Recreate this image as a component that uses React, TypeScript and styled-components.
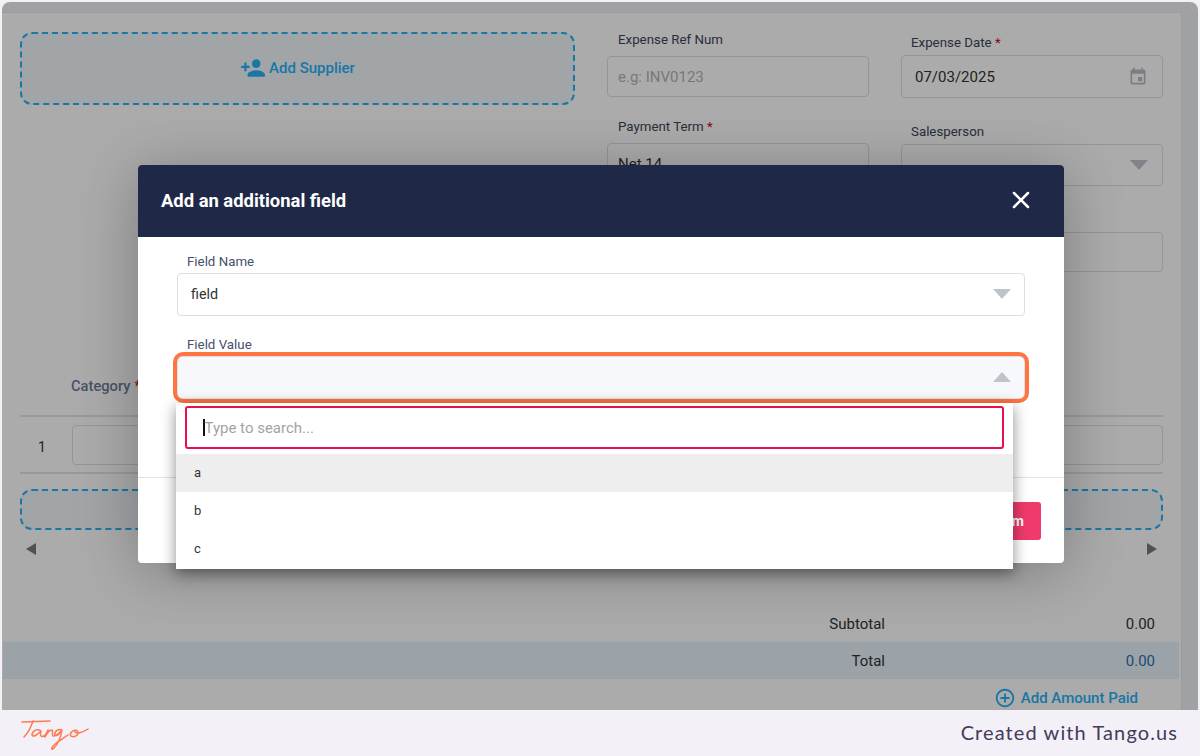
import styled, { createGlobalStyle } from 'styled-components'
import { MdPersonAdd, MdEvent, MdAddCircleOutline } from 'react-icons/md'
import { X } from 'lucide-react'

const Global = createGlobalStyle`
    html, body {
        margin: 0;
        padding: 0;
        height: 756px;
        overflow: hidden;
        font-family: Roboto, "Liberation Sans", sans-serif;
    }
`;

const Page = styled.div`
    width: 1200px;
    height: 756px;
    background: #f3f1f7;
    display: flex;
    flex-direction: column;
    padding: 2px 2px 0;
    box-sizing: border-box;
`;

const Stage = styled.div`
    position: relative;
    flex: none;
    height: 708px;
    background: #eff1f4;
    border-radius: 8px 8px 0 0;
    overflow: hidden;
    padding-top: 10px;
    box-sizing: border-box;
`;

const Card = styled.div`
    width: 1180px;
    height: 698px;
    background: #fff;
    border-top: 1px solid #e8e8e8;
    border-right: 1px solid #e8e8e8;
    padding: 19px 18px 0;
    box-sizing: border-box;
`;

const TopGrid = styled.div`
    display: grid;
    grid-template-columns: 555px 262px 262px;
    column-gap: 32px;
    align-items: start;
`;

const DashedBox = styled.div<{ $h: number }>`
    height: ${p => p.$h}px;
    border: 2px dashed #25b2f5;
    border-radius: 12px;
    background: #f2f7fb;
    box-sizing: border-box;
    display: flex;
    align-items: center;
    justify-content: center;
    gap: 3px;
    padding-bottom: 2px;
    color: #25b2f5;
    font-size: 15px;
    font-weight: 500;
`;

const Label = styled.div<{ $above?: number; $gap?: number }>`
    height: 16px;
    line-height: 16px;
    font-size: 13.3px;
    color: #3c4658;
    margin-top: ${p => p.$above ?? 0}px;
    margin-bottom: ${p => p.$gap ?? 4}px;
`;

const FieldColumn = styled.div<{ $top: number; $indent: number }>`
    display: flex;
    flex-direction: column;
    padding-top: ${p => p.$top}px;

    ${Label} {
        padding-left: ${p => p.$indent}px;
    }
`;

const Star = styled.span`
    color: #d0021b;
`;

const Input = styled.div<{ $h: number; $above?: number; $muted?: boolean; $inset?: number }>`
    height: ${p => p.$h}px;
    margin-top: ${p => p.$above ?? 0}px;
    border: 1px solid #dcdfe4;
    border-radius: 4px;
    box-sizing: border-box;
    display: flex;
    align-items: center;
    justify-content: space-between;
    padding: 0 14px 0 ${p => p.$inset ?? 10}px;
    font-size: 15px;
    color: ${p => (p.$muted ? '#b4b4b4' : '#333')};
`;

const Caret = styled.span<{ $up?: boolean }>`
    flex: none;
    width: 0;
    height: 0;
    border-left: 9.5px solid transparent;
    border-right: 9.5px solid transparent;
    border-top: ${p => (p.$up ? '0' : '10px solid #bfc3ca')};
    border-bottom: ${p => (p.$up ? '10px solid #bfc3ca' : '0')};
`;

const TableHead = styled.div`
    margin-top: 97px;
    height: 48px;
    padding: 0 0 12px 51px;
    border-bottom: 2px solid #e4e4e4;
    box-sizing: border-box;
    display: flex;
    align-items: center;
    gap: 4px;
    font-size: 14.7px;
    font-weight: 500;
    color: #6d7d9c;
`;

const TableRow = styled.div`
    height: 57px;
    border-bottom: 2px solid #e4e4e4;
    box-sizing: border-box;
    display: flex;
    align-items: center;
    font-size: 14px;
    color: #333;
`;

const RowNumber = styled.div`
    width: 52px;
    padding: 4px 0 0 18px;
    box-sizing: border-box;
`;

const RowInput = styled.div`
    flex: 1;
    height: 40px;
    border: 1px solid #dcdfe4;
    border-radius: 4px;
    box-sizing: border-box;
`;

const AddRow = styled.div`
    margin-top: 15px;
`;

const ScrollBar = styled.div`
    display: flex;
    justify-content: space-between;
    align-items: center;
    margin-top: 13px;
    padding: 0 6px;
`;

const Arrow = styled.span<{ $right?: boolean }>`
    width: 0;
    height: 0;
    border-top: 6.5px solid transparent;
    border-bottom: 6.5px solid transparent;
    border-left: ${p => (p.$right ? '10px solid #7a7a7a' : '0')};
    border-right: ${p => (p.$right ? '0' : '10px solid #7a7a7a')};
`;

const Totals = styled.div`
    margin: 50px -16px 0 -17px;
    font-size: 15px;
    color: #333;
`;

const TotalRow = styled.div<{ $hl?: boolean }>`
    height: 37px;
    display: flex;
    align-items: center;
    justify-content: flex-end;
    padding-right: 24px;
    background: ${p => (p.$hl ? '#e7f4fd' : 'transparent')};
`;

const TotalValue = styled.span<{ $blue?: boolean }>`
    width: 270px;
    text-align: right;
    color: ${p => (p.$blue ? '#2f6fa8' : '#333')};
`;

const AddPaid = styled.div`
    display: flex;
    align-items: center;
    justify-content: flex-end;
    gap: 5px;
    height: 36px;
    padding: 1px 41px 0 0;
    box-sizing: border-box;
    color: #25b2f5;
    font-size: 15px;
    font-weight: 500;
`;

const Overlay = styled.div`
    position: absolute;
    inset: 0;
    background: rgba(0, 0, 0, 0.33);
    padding: 163px 0 0 136px;
    box-sizing: border-box;
`;

const Modal = styled.div`
    width: 926px;
    height: 398px;
    background: #fff;
    border-radius: 4px;
    box-shadow: 0 8px 60px rgba(0, 0, 0, 0.28);
`;

const ModalHeader = styled.div`
    height: 72px;
    background: #1f2947;
    border-radius: 4px 4px 0 0;
    display: flex;
    align-items: center;
    justify-content: space-between;
    padding: 0 29px 2px 23px;
    box-sizing: border-box;
    color: #fff;
    font-size: 18.4px;
    font-weight: 700;
`;

const ModalBody = styled.div`
    height: 241px;
    padding: 17px 39px 0;
    border-bottom: 1px solid #e2e2e2;
    box-sizing: border-box;
`;

const ModalLabel = styled.div<{ $above?: number }>`
    height: 16px;
    line-height: 16px;
    margin: ${p => p.$above ?? 0}px 0 3px 10px;
    font-size: 13.3px;
    color: #44506b;
`;

const SelectWrap = styled.div`
    position: relative;
`;

const Select = styled.div<{ $open?: boolean }>`
    height: 43px;
    border: 1px solid #dcdfe4;
    border-radius: ${p => (p.$open ? 6 : 4)}px;
    box-sizing: border-box;
    display: flex;
    align-items: center;
    justify-content: space-between;
    padding: 0 13px 2px 13px;
    font-size: 14.3px;
    color: #333;
    background: ${p => (p.$open ? '#f6f8fc' : '#fff')};
    outline: ${p => (p.$open ? '4px solid #ff7442' : 'none')};
`;

const Dropdown = styled.div`
    position: absolute;
    top: 47px;
    left: -1px;
    width: 837px;
    height: 166px;
    background: #fff;
    box-shadow: 0 4px 14px rgba(0, 0, 0, 0.45);
    padding-top: 3px;
    box-sizing: border-box;
`;

const SearchBox = styled.div`
    margin: 0 9px 5px;
    height: 43px;
    border: 2px solid #e8104a;
    border-radius: 3px;
    box-sizing: border-box;
    display: flex;
    align-items: center;
    padding-left: 16px;
    font-size: 15px;
    color: #a3a3a3;
`;

const TextCursor = styled.span`
    width: 1.5px;
    height: 17px;
    background: #111;
`;

const Option = styled.div<{ $active?: boolean }>`
    height: 38.3px;
    padding: 0 0 2px 18px;
    box-sizing: border-box;
    display: flex;
    align-items: center;
    font-size: 13px;
    color: #333;
    background: ${p => (p.$active ? '#eeeeee' : 'transparent')};
`;

const ModalFooter = styled.div`
    display: flex;
    justify-content: flex-end;
    padding: 24px 23px 0 0;
`;

const ConfirmButton = styled.div`
    height: 38px;
    padding: 0 17px;
    background: #f03a6c;
    border-radius: 3px;
    display: flex;
    align-items: center;
    color: #fff;
    font-size: 14px;
    font-weight: 700;
`;

const Footer = styled.div`
    flex: 1;
    display: flex;
    align-items: center;
    justify-content: space-between;
    padding: 0 20px 0 18px;
`;

const Credit = styled.div`
    font-family: Lato, sans-serif;
    font-size: 20px;
    letter-spacing: 1.1px;
    color: #453a5a;
    padding-bottom: 2px;
`;

const TangoLogo = () => (
    <svg width="72" height="36" viewBox="0 0 72 36" fill="none" stroke="#ff7a50" strokeWidth="1.5" strokeLinecap="round" strokeLinejoin="round">
        <path d="M2 7 L30 6" />
        <path d="M13 6 C11 12 8 18 4 22" />
        <path d="M21 16 C17 13 12 16 12 20 C13 23 18 19 21 16 C20 19 20 23 24 21 C26 20 27 17 28 15 C27 18 26 20 25 22 C27 18 30 15 32 15 C34 16 31 20 33 21 C36 22 39 18 42 15 C38 13 34 17 35 20 C37 22 40 18 42 15 C41 21 39 28 34 33 C31 36 31 33 34 30 C38 26 44 23 48 20" />
        <path d="M56 15 C52 15 49 19 51 21 C54 23 59 20 58 17 C57 15 55 15 55 17 C56 19 62 18 68 14" />
    </svg>
);

export default function App() {
    return (
        <Page>
            <Global />
            <Stage>
                <Card>
                    <TopGrid>
                        <DashedBox $h={73}>
                            <MdPersonAdd size={26} />
                            Add Supplier
                        </DashedBox>
                        <FieldColumn $top={0} $indent={11}>
                            <Label $gap={8}>Expense Ref Num</Label>
                            <Input $h={41} $muted>e.g: INV0123</Input>
                            <Label $above={22} $gap={8}>Payment Term <Star>*</Star></Label>
                            <Input $h={42}>Net 14</Input>
                        </FieldColumn>
                        <FieldColumn $top={3} $indent={10}>
                            <Label>Expense Date <Star>*</Star></Label>
                            <Input $h={43} $inset={13}>
                                07/03/2025
                                <MdEvent size={20} color="#b9bdc4" />
                            </Input>
                            <Label $above={26} $gap={4}>Salesperson</Label>
                            <Input $h={42}>
                                <span />
                                <Caret />
                            </Input>
                            <Input $h={40} $above={46} />
                        </FieldColumn>
                    </TopGrid>
                    <TableHead>
                        Category
                        <Star>*</Star>
                    </TableHead>
                    <TableRow>
                        <RowNumber>1</RowNumber>
                        <RowInput />
                    </TableRow>
                    <AddRow>
                        <DashedBox $h={41} />
                    </AddRow>
                    <ScrollBar>
                        <Arrow />
                        <Arrow $right />
                    </ScrollBar>
                    <Totals>
                        <TotalRow>
                            Subtotal
                            <TotalValue>0.00</TotalValue>
                        </TotalRow>
                        <TotalRow $hl>
                            Total
                            <TotalValue $blue>0.00</TotalValue>
                        </TotalRow>
                        <AddPaid>
                            <MdAddCircleOutline size={22} />
                            Add Amount Paid
                        </AddPaid>
                    </Totals>
                </Card>
                <Overlay>
                    <Modal>
                        <ModalHeader>
                            Add an additional field
                            <X size={28} strokeWidth={2.2} />
                        </ModalHeader>
                        <ModalBody>
                            <ModalLabel>Field Name</ModalLabel>
                            <Select>
                                field
                                <Caret />
                            </Select>
                            <ModalLabel $above={21}>Field Value</ModalLabel>
                            <SelectWrap>
                                <Select $open>
                                    <span />
                                    <Caret $up />
                                </Select>
                                <Dropdown>
                                    <SearchBox>
                                        <TextCursor />
                                        Type to search...
                                    </SearchBox>
                                    <Option $active>a</Option>
                                    <Option>b</Option>
                                    <Option>c</Option>
                                </Dropdown>
                            </SelectWrap>
                        </ModalBody>
                        <ModalFooter>
                            <ConfirmButton>Confirm</ConfirmButton>
                        </ModalFooter>
                    </Modal>
                </Overlay>
            </Stage>
            <Footer>
                <TangoLogo />
                <Credit>Created with Tango.us</Credit>
            </Footer>
        </Page>
    )
};
